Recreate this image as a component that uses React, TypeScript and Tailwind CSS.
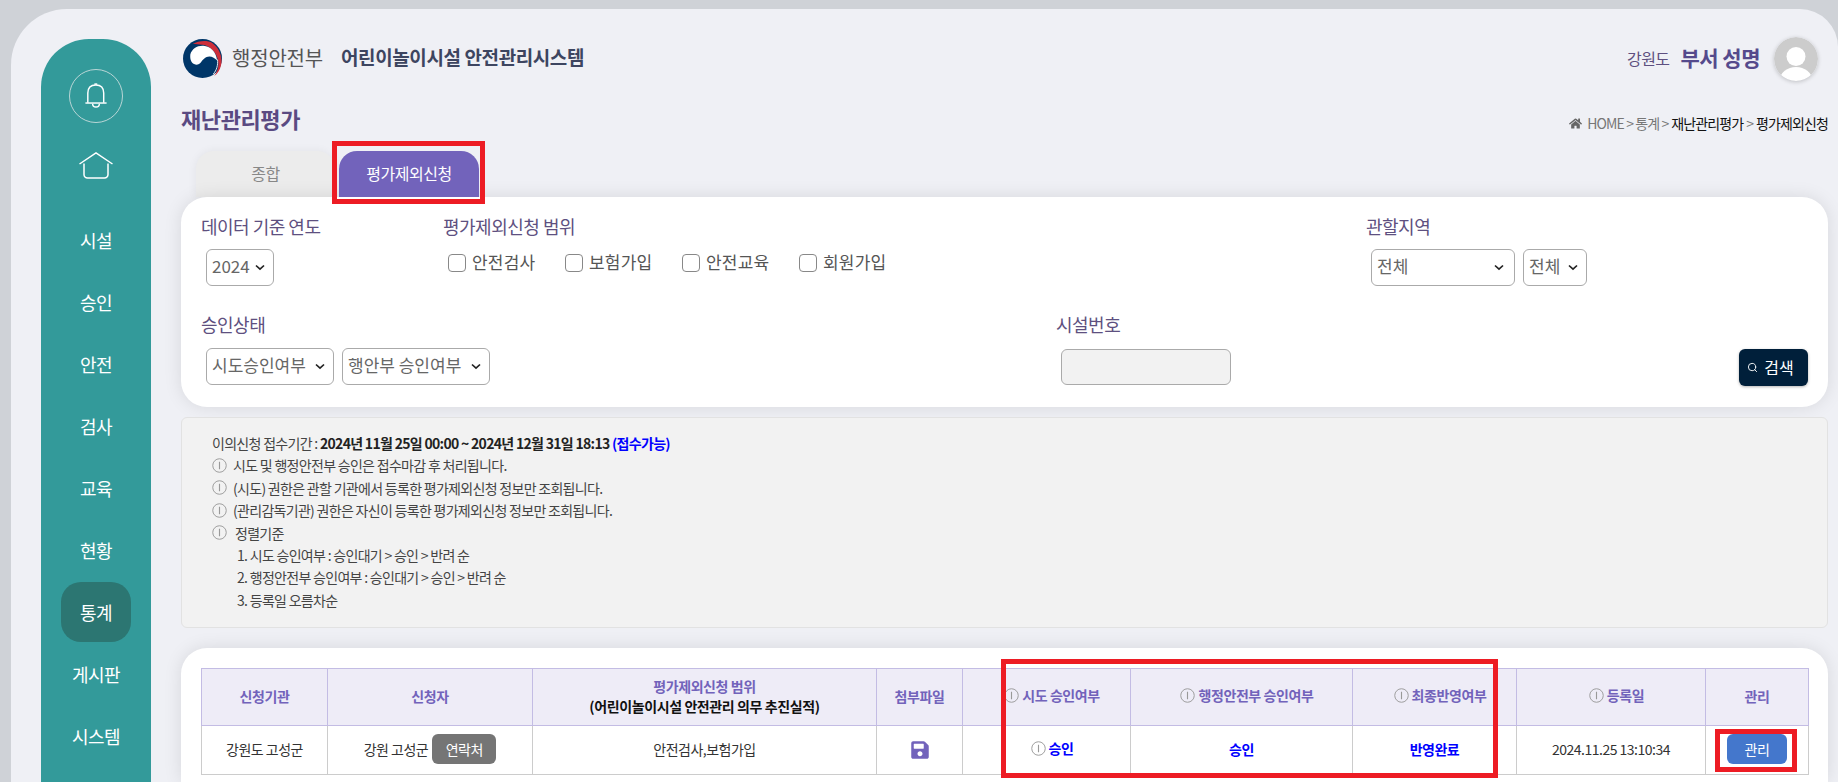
import React from "react";
import { FaHome, FaSave } from "react-icons/fa";
import { Search } from "lucide-react";

const font = { fontFamily: '"Noto Sans CJK KR", "Noto Sans", sans-serif' };

function Chevron() {
  return (
    <svg width="10" height="7" viewBox="0 0 10 7" className="shrink-0">
      <path d="M1 1.5 L5 5.2 L9 1.5" fill="none" stroke="#222" strokeWidth="1.7" />
    </svg>
  );
}

function Sel({ w, text, full }: { w: string; text: string; full?: boolean }) {
  return (
    <div className={`${w} h-[37px] border border-[#aaaaaa] rounded-[6px] bg-white flex items-center justify-between pl-[5px] ${full ? "pr-[10px]" : "pr-[8px]"} text-[17px] text-[#666666]`}>
      <span className="whitespace-nowrap pb-[3px]">{text}</span>
      <Chevron />
    </div>
  );
}

function Info({ size = 15 }: { size?: number }) {
  return (
    <svg width={size} height={size} viewBox="0 0 16 16" className="shrink-0">
      <circle cx="8" cy="8" r="7.2" fill="none" stroke="#999999" strokeWidth="1" />
      <path d="M8 4 V12" stroke="#999999" strokeWidth="1.2" />
    </svg>
  );
}

function Check({ label, w }: { label: string; w: string }) {
  return (
    <label className={`${w} flex items-center gap-[6px]`}>
      <input type="checkbox" className="appearance-none w-[18px] h-[18px] border border-[#888888] rounded-[4px] bg-white" />
      <span className="text-[17px] tracking-[0.2px] text-[#555555] whitespace-nowrap pb-[2px]">{label}</span>
    </label>
  );
}

const nav = ["시설", "승인", "안전", "검사", "교육", "현황", "통계", "게시판", "시스템"];

const notes = [
  "시도 및 행정안전부 승인은 접수마감 후 처리됩니다.",
  "(시도) 권한은 관할 기관에서 등록한 평가제외신청 정보만 조회됩니다.",
  "(관리감독기관) 권한은 자신이 등록한 평가제외신청 정보만 조회됩니다.",
];

const sub = ["1. 시도 승인여부 : 승인대기 > 승인 > 반려 순", "2. 행정안전부 승인여부 : 승인대기 > 승인 > 반려 순", "3. 등록일 오름차순"];

const th = "border border-[#c3bce4] bg-[#eeecf7] text-[14px] font-bold text-[#7263bb] tracking-[-0.4px] leading-[20px] text-center align-middle pb-[2px]";
const td = "border border-[#cccccc] text-[14px] text-[#333333] tracking-[-0.5px] text-center align-middle pb-[2px]";
const label = "h-[26px] leading-[22px] text-[18px] tracking-[-0.5px]";

function HeadInfo({ text }: { text: string }) {
  return (
    <span className="inline-flex items-center justify-center gap-[3px] pl-[11px]">
      <Info />
      {text}
    </span>
  );
}

export default function App() {
  return (
    <div style={font} className="h-[782px] w-full overflow-hidden bg-[#cfd2d7] pt-[9px] pl-[11px]">
      <div className="flex h-[773px] rounded-tl-[56px] rounded-tr-[38px] bg-[#eff0f5] pl-[30px] pr-[10px] pt-[30px]">
        <aside className="w-[110px] shrink-0 h-[800px] rounded-t-[48px] bg-[#339a9a] flex flex-col items-center pt-[30px]">
          <div className="w-[54px] h-[54px] rounded-full border border-[#b9d6d6] flex items-center justify-center">
            <svg width="54" height="54" viewBox="0 0 54 54" fill="none" stroke="white" strokeWidth="1.5">
              <path d="M18.5 34 V24 C18.5 18 22 15.5 26.8 15.5 C31.5 15.5 35 18 35 24 V34" />
              <path d="M16 34.3 H38" />
              <path d="M23.5 35 a3.4 3.4 0 0 0 7 0" />
              <path d="M25.3 14.6 h3" />
            </svg>
          </div>
          <svg className="mt-[29px]" width="34" height="27" viewBox="0 0 34 27" fill="none" stroke="white" strokeWidth="1.5">
            <path d="M0.5 12 L17 1 L33.5 12" />
            <path d="M5 11.5 V22.5 a3.5 3.5 0 0 0 3.5 3.5 H25.5 a3.5 3.5 0 0 0 3.5 -3.5 V11.5" />
          </svg>
          <div className="mt-[30px] flex flex-col items-center">
            {nav.map((n) => (
              <div key={n} className="h-[62px] flex items-center justify-center">
                <div className={`w-[70px] h-[60px] rounded-[20px] flex items-center justify-center text-[18px] tracking-[-0.5px] text-white ${n === "통계" ? "bg-[#2c7672]" : ""}`}>
                  {n}
                </div>
              </div>
            ))}
          </div>
        </aside>

        <main className="ml-[30px] flex-1 min-w-0 flex flex-col">
          <header className="h-[39px] flex items-center">
            <svg width="39" height="39" viewBox="0 0 40 40" className="ml-[2px] shrink-0">
              <circle cx="20" cy="20" r="20" fill="#003668" />
              <path d="M10 5 C16 1.5 25 1 30 4 C37 9 41 18 39 27 C38 32 35 36 32 38 C36 33 37 27 36 22 C34 13 27 7 20 6 C16 5.5 13 5 10 5 Z" fill="#cd2e3a" />
              <path d="M7.5 16 C9 10 15 6.5 21 7 C28 7.5 34 13 35 22 C33 20 30 18 27 18 C23 18 21 21 19 23 C17 26 14 27 12 26 C8.5 25 7 21 7.5 16 Z" fill="white" />
              <path d="M35.4 21 C36 27 34.5 32 31 36" fill="none" stroke="white" strokeWidth="0.9" />
            </svg>
            <span className="ml-[10px] text-[20px] tracking-[-0.2px] text-[#555555] pb-[2px]">행정안전부</span>
            <span className="ml-[18px] text-[19px] font-bold tracking-[-0.4px] text-[#3d4560] pb-[2px]">어린이놀이시설 안전관리시스템</span>
            <div className="ml-auto flex items-center mr-[10px]">
              <span className="text-[16px] tracking-[-0.6px] text-[#5e5080] pb-[2px]">강원도</span>
              <span className="ml-[11px] text-[21px] font-bold tracking-[-0.5px] text-[#554a8c] pb-[2px]">부서 성명</span>
              <svg width="44" height="44" viewBox="0 0 44 44" className="ml-[14px] rounded-full shadow-[0_1px_4px_rgba(0,0,0,0.2)]">
                <clipPath id="av"><circle cx="22" cy="22" r="22" /></clipPath>
                <g clipPath="url(#av)">
                  <rect width="44" height="44" fill="#cccccc" />
                  <circle cx="22" cy="19.5" r="9.5" fill="white" />
                  <ellipse cx="22" cy="43" rx="16" ry="13" fill="white" />
                </g>
              </svg>
            </div>
          </header>

          <div className="mt-[26px] h-[30px] flex items-center">
            <h1 className="text-[22px] font-bold tracking-[-0.4px] text-[#5a4a82] pb-[2px]">재난관리평가</h1>
            <div className="ml-auto mt-[9px] flex items-center text-[14px] tracking-[-0.9px] text-[#777777] whitespace-nowrap">
              <FaHome className="mr-[5px] text-[13px] text-[#666666]" />
              <span>HOME &gt; 통계 &gt; </span>
              <span className="ml-[3px] text-[#111111]">재난관리평가</span>
              <span className="mx-[3px]">&gt;</span>
              <span className="text-[#111111]">평가제외신청</span>
            </div>
          </div>

          <div className="mt-[17px] h-[46px] pl-[15px] flex gap-[4px]">
            <div className="w-[139px] rounded-t-[18px] bg-[#ececec] shadow-[0_0_10px_rgba(0,0,0,0.06)] flex items-center justify-center text-[16px] tracking-[-0.5px] text-[#888888] pb-[2px]">종합</div>
            <div className="relative z-10 w-[140px] rounded-t-[18px] bg-[#7263bb] flex items-center justify-center text-[16px] tracking-[-0.5px] text-white pb-[2px]">
              평가제외신청
              <div className="absolute left-[-7px] top-[-10px] w-[153px] h-[63px] border-[5px] border-[#ed1c24]" />
            </div>
          </div>

          <section className="h-[210px] rounded-[26px] bg-white shadow-[0_0_18px_rgba(0,0,0,0.1)] px-[20px] pt-[18px] text-[#5e5080]">
            <div className="flex">
              <div className="w-[242px]">
                <div className={label}>데이터 기준 연도</div>
                <div className="mt-[8px] pl-[5px]"><Sel w="w-[68px]" text="2024" /></div>
              </div>
              <div className="w-[923px]">
                <div className={label}>평가제외신청 범위</div>
                <div className="mt-[8px] pl-[5px] h-[37px] flex items-start">
                  <Check label="안전검사" w="w-[117px]" />
                  <Check label="보험가입" w="w-[117px]" />
                  <Check label="안전교육" w="w-[117px]" />
                  <Check label="회원가입" w="w-[117px]" />
                </div>
              </div>
              <div>
                <div className={label}>관할지역</div>
                <div className="mt-[8px] pl-[5px] flex gap-[8px]">
                  <Sel w="w-[144px]" text="전체" full />
                  <Sel w="w-[64px]" text="전체" />
                </div>
              </div>
            </div>
            <div className="mt-[27px] flex">
              <div className="w-[855px]">
                <div className={label}>승인상태</div>
                <div className="mt-[9px] pl-[5px] flex gap-[8px]">
                  <Sel w="w-[128px]" text="시도승인여부" />
                  <Sel w="w-[148px]" text="행안부 승인여부" />
                </div>
              </div>
              <div>
                <div className={label}>시설번호</div>
                <div className="mt-[10px] ml-[5px] w-[170px] h-[36px] rounded-[6px] border border-[#aaaaaa] bg-[#f2f2f2]" />
              </div>
              <button className="ml-auto mt-[36px] w-[69px] h-[37px] rounded-[6px] bg-[#001f3a] shadow-[0_1px_3px_rgba(0,0,0,0.3)] flex items-center justify-center gap-[6px] text-white text-[16px] pr-[6px]">
                <Search size={11} strokeWidth={2} />
                <span className="pb-[2px]">검색</span>
              </button>
            </div>
          </section>

          <section className="mt-[10px] h-[211px] rounded-[6px] border border-[#e2e2e2] bg-[#f2f2f2] pl-[30px] pt-[14px] text-[14px] leading-[22.4px] tracking-[-0.7px] text-[#444444]">
            <div className="h-[22.4px] whitespace-nowrap">
              이의신청 접수기간 : <span className="font-bold text-[#222222]">2024년 11월 25일 00:00 ~ 2024년 12월 31일 18:13</span> <span className="font-bold text-[#0000ff]">(접수가능)</span>
            </div>
            {notes.map((n) => (
              <div key={n} className="h-[22.4px] flex items-center gap-[6px] whitespace-nowrap"><Info /><span>{n}</span></div>
            ))}
            <div className="h-[22.4px] flex items-center gap-[8px]"><Info /><span>정렬기준</span></div>
            {sub.map((n) => (
              <div key={n} className="h-[22.4px] pl-[25px] whitespace-nowrap">{n}</div>
            ))}
          </section>

          <section className="mt-[20px] flex-1 rounded-t-[26px] bg-white shadow-[0_0_18px_rgba(0,0,0,0.1)] px-[20px] pt-[20px]">
            <div className="relative">
              <table className="w-full table-fixed border-collapse">
                <colgroup>
                  <col className="w-[126px]" /><col className="w-[205px]" /><col className="w-[344px]" /><col className="w-[86px]" /><col className="w-[168px]" /><col className="w-[222px]" /><col className="w-[164px]" /><col className="w-[189px]" /><col className="w-[103px]" />
                </colgroup>
                <thead>
                  <tr className="h-[57px]">
                    <th className={th}>신청기관</th>
                    <th className={th}>신청자</th>
                    <th className={th}>평가제외신청 범위<br /><span className="text-[#111111]">(어린이놀이시설 안전관리 의무 추진실적)</span></th>
                    <th className={th}>첨부파일</th>
                    <th className={th}><HeadInfo text="시도 승인여부" /></th>
                    <th className={th}><HeadInfo text="행정안전부 승인여부" /></th>
                    <th className={th}><HeadInfo text="최종반영여부" /></th>
                    <th className={th}><HeadInfo text="등록일" /></th>
                    <th className={th}>관리</th>
                  </tr>
                </thead>
                <tbody>
                  <tr className="h-[49px]">
                    <td className={td}>강원도 고성군</td>
                    <td className={td}>
                      <span className="inline-flex items-center gap-[4px]">강원 고성군<span className="inline-flex items-center justify-center w-[64px] h-[30px] rounded-[6px] bg-[#757575] text-white">연락처</span></span>
                    </td>
                    <td className={td}>안전검사,보험가입</td>
                    <td className={td}><FaSave className="inline-block text-[20px] text-[#7263bb]" /></td>
                    <td className={td}><span className="inline-flex items-center gap-[3px] pl-[11px] font-bold text-[#0000ff]"><Info />승인</span></td>
                    <td className={td}><span className="font-bold text-[#0000ff]">승인</span></td>
                    <td className={td}><span className="font-bold text-[#0000ff]">반영완료</span></td>
                    <td className={td}>2024.11.25 13:10:34</td>
                    <td className={td}><span className="inline-flex items-center justify-center w-[60px] h-[30px] rounded-[6px] bg-[#4477cc] text-white">관리</span></td>
                  </tr>
                </tbody>
              </table>
              <div className="absolute left-[800px] top-[-9px] w-[497px] h-[119px] border-[5px] border-[#ed1c24]" />
              <div className="absolute left-[1514px] top-[61px] w-[82px] h-[43px] border-[5px] border-[#ed1c24]" />
            </div>
          </section>
        </main>
      </div>
    </div>
  );
}
